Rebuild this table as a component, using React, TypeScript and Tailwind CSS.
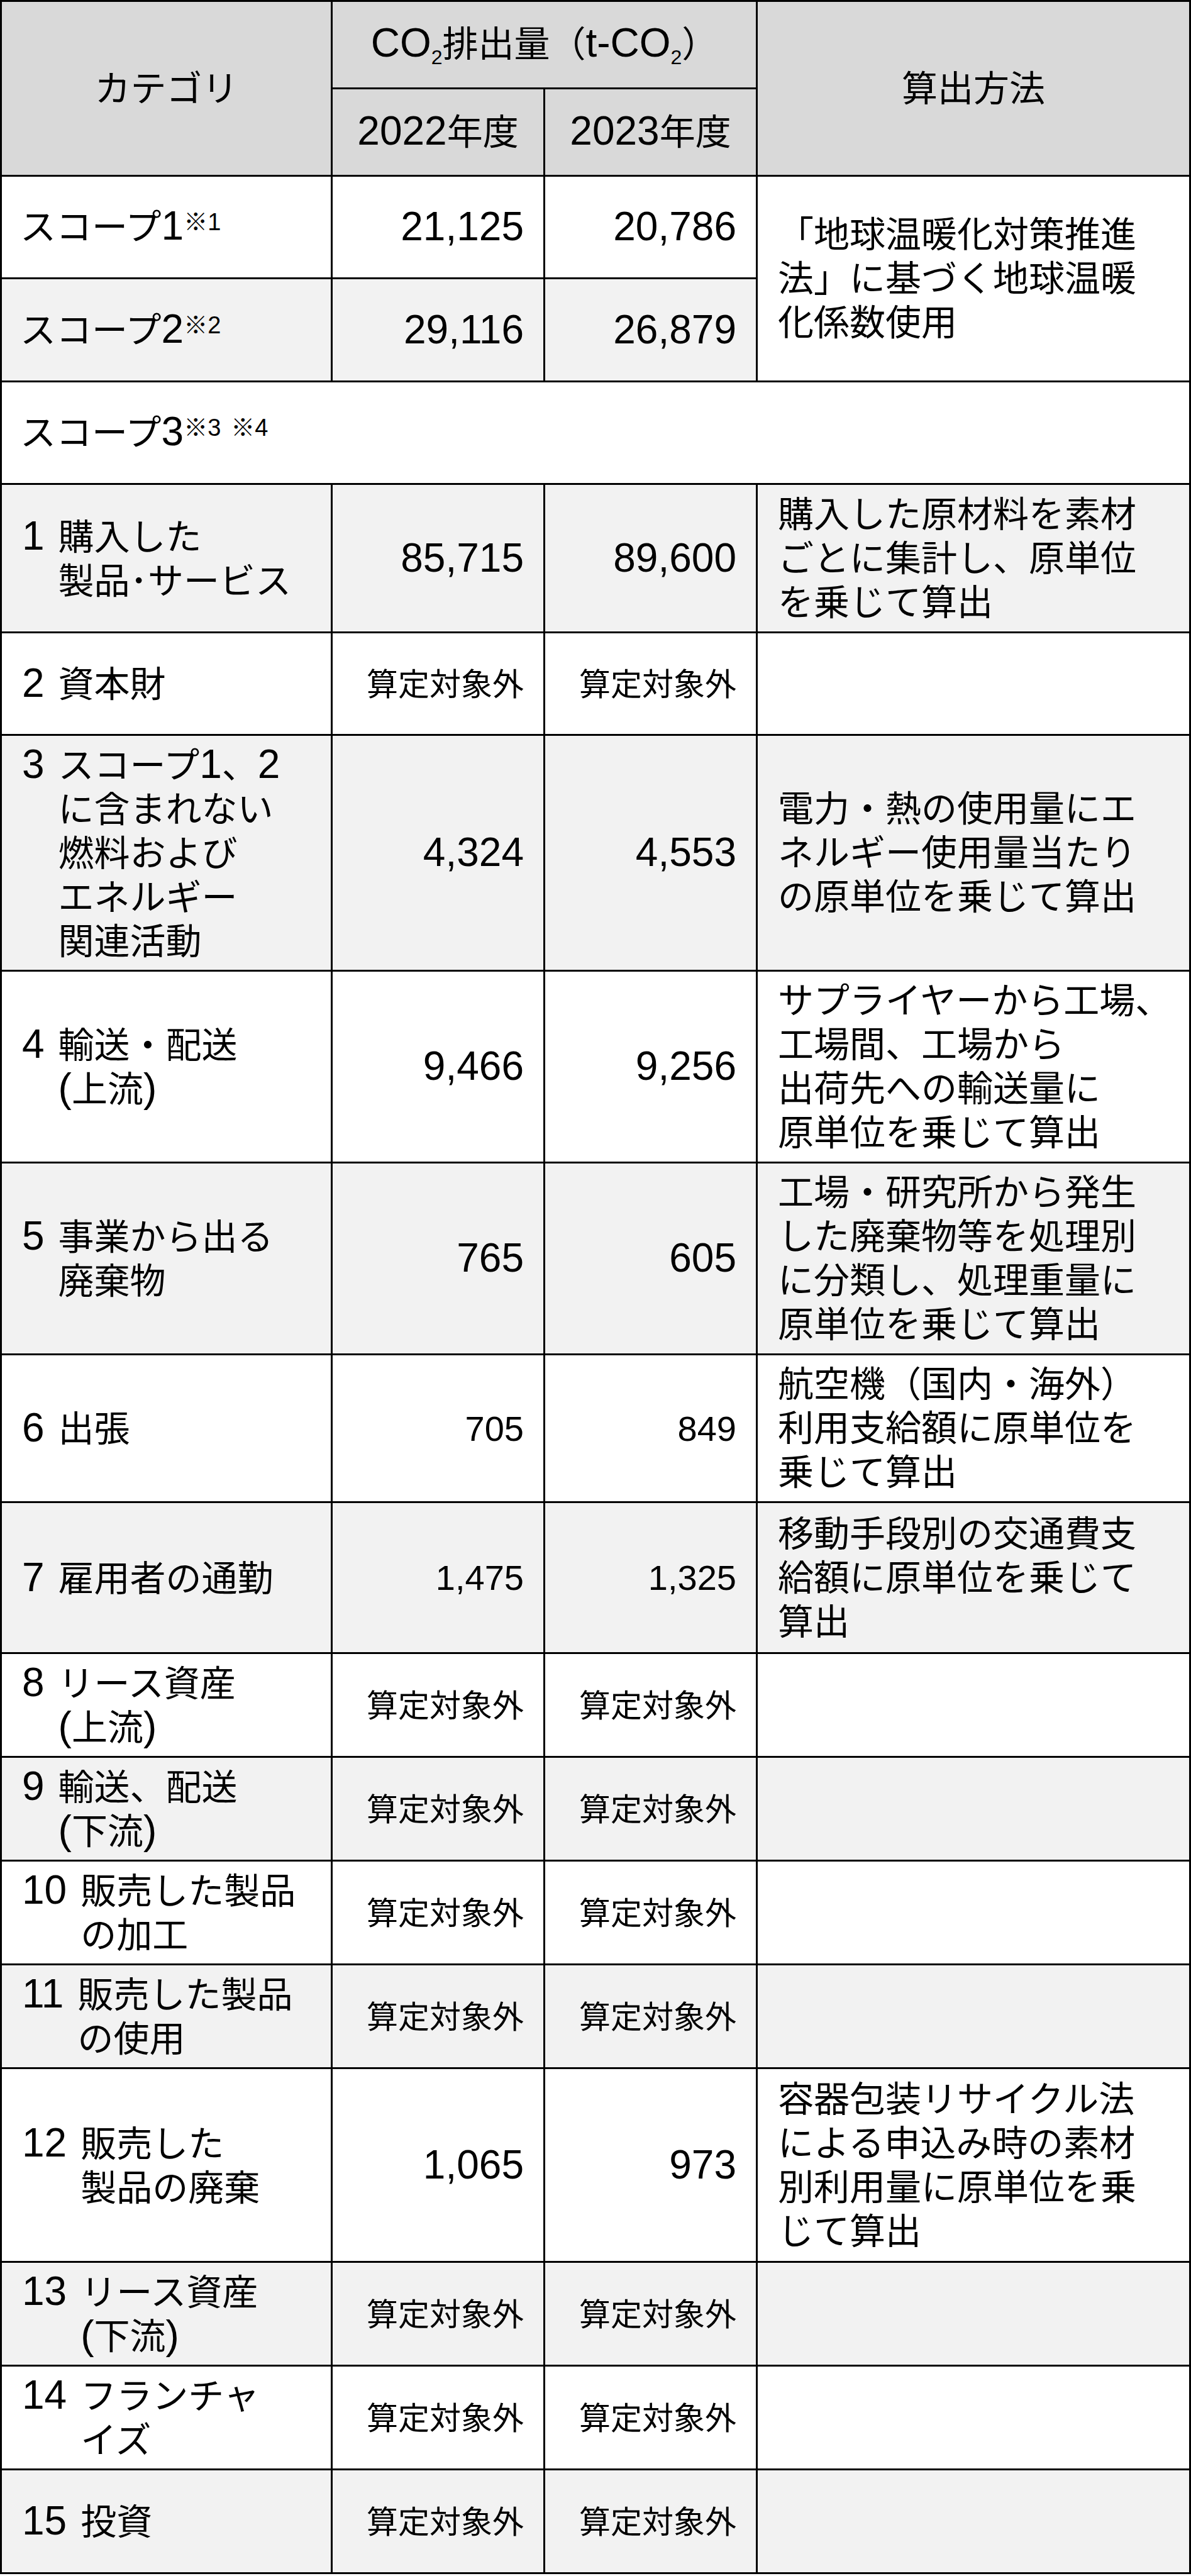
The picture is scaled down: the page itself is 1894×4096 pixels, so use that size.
import React from 'react';

type Row = {
  no: string;
  label: string[];
  v22: string;
  v23: string;
  small?: boolean;
  method?: string[];
  h: string;
  gray: boolean;
};

const rows: Row[] = [
  { no: '1', label: ['購入した', '製品･サービス'], v22: '85,715', v23: '89,600', method: ['購入した原材料を素材', 'ごとに集計し、原単位', 'を乗じて算出'], h: 'h-[236px]', gray: true },
  { no: '2', label: ['資本財'], v22: '算定対象外', v23: '算定対象外', h: 'h-[163px]', gray: false },
  { no: '3', label: ['スコープ1、2', 'に含まれない', '燃料および', 'エネルギー', '関連活動'], v22: '4,324', v23: '4,553', method: ['電力・熱の使用量にエ', 'ネルギー使用量当たり', 'の原単位を乗じて算出'], h: 'h-[375px]', gray: true },
  { no: '4', label: ['輸送・配送', '(上流)'], v22: '9,466', v23: '9,256', method: ['サプライヤーから工場、', '工場間、工場から', '出荷先への輸送量に', '原単位を乗じて算出'], h: 'h-[305px]', gray: false },
  { no: '5', label: ['事業から出る', '廃棄物'], v22: '765', v23: '605', method: ['工場・研究所から発生', 'した廃棄物等を処理別', 'に分類し、処理重量に', '原単位を乗じて算出'], h: 'h-[305px]', gray: true },
  { no: '6', label: ['出張'], v22: '705', v23: '849', small: true, method: ['航空機（国内・海外）', '利用支給額に原単位を', '乗じて算出'], h: 'h-[235px]', gray: false },
  { no: '7', label: ['雇用者の通勤'], v22: '1,475', v23: '1,325', small: true, method: ['移動手段別の交通費支', '給額に原単位を乗じて', '算出'], h: 'h-[240px]', gray: true },
  { no: '8', label: ['リース資産', '(上流)'], v22: '算定対象外', v23: '算定対象外', h: 'h-[165px]', gray: false },
  { no: '9', label: ['輸送、配送', '(下流)'], v22: '算定対象外', v23: '算定対象外', h: 'h-[165px]', gray: true },
  { no: '10', label: ['販売した製品', 'の加工'], v22: '算定対象外', v23: '算定対象外', h: 'h-[165px]', gray: false },
  { no: '11', label: ['販売した製品', 'の使用'], v22: '算定対象外', v23: '算定対象外', h: 'h-[165px]', gray: true },
  { no: '12', label: ['販売した', '製品の廃棄'], v22: '1,065', v23: '973', method: ['容器包装リサイクル法', 'による申込み時の素材', '別利用量に原単位を乗', 'じて算出'], h: 'h-[308px]', gray: false },
  { no: '13', label: ['リース資産', '(下流)'], v22: '算定対象外', v23: '算定対象外', h: 'h-[165px]', gray: true },
  { no: '14', label: ['フランチャ', 'イズ'], v22: '算定対象外', v23: '算定対象外', h: 'h-[165px]', gray: false },
  { no: '15', label: ['投資'], v22: '算定対象外', v23: '算定対象外', h: 'h-[165px]', gray: true },
];

const cell = 'border-[3px] border-black py-[6px]';

// latin runs are set a bit larger, like the original font's latin glyphs
const L = ({ children }: { children: React.ReactNode }) => (
  <span className="text-[64px] leading-none">{children}</span>
);

function rich(s: string) {
  return s.split(/([\x21-\x7e]+)/).map((p, i) =>
    /^[\x21-\x7e]+$/.test(p) ? <L key={i}>{p}</L> : p
  );
}

const Lines = ({ lines }: { lines: string[] }) => (
  <>
    {lines.map((l, i) => (
      <React.Fragment key={i}>
        {i > 0 && <br />}
        {rich(l)}
      </React.Fragment>
    ))}
  </>
);

const Sup = ({ children }: { children: React.ReactNode }) => (
  <span className="text-[38px] leading-none align-[15px]">{children}</span>
);

const Sub = ({ children }: { children: React.ReactNode }) => (
  <span className="text-[32px] leading-none align-[-12px]">{children}</span>
);

const Value = ({ v, small }: { v: string; small?: boolean }) => {
  if (v === '算定対象外') return <span className="text-[50px]">{v}</span>;
  return <span className={small ? 'text-[56px]' : 'text-[64px]'}>{v}</span>;
};

const App: React.FC = () => {
  return (
    <div className="bg-white w-[1894px]">
      <table className="w-[1891px] table-fixed border-collapse whitespace-nowrap text-black text-[57px] leading-[70px] font-['Liberation_Sans','Noto_Sans_CJK_JP',sans-serif]">
        <colgroup>
          <col className="w-[526px]" />
          <col className="w-[338px]" />
          <col className="w-[338px]" />
          <col className="w-[689px]" />
        </colgroup>
        <thead>
          <tr className="h-[139px] bg-[#d9d9d9]">
            <th rowSpan={2} className={`${cell} font-normal text-center`}>カテゴリ</th>
            <th colSpan={2} className={`${cell} font-normal text-center`}>
              <L>CO</L><Sub>2</Sub>排出量（<L>t-CO</L><Sub>2</Sub>）
            </th>
            <th rowSpan={2} className={`${cell} font-normal text-center`}>算出方法</th>
          </tr>
          <tr className="h-[139px] bg-[#d9d9d9]">
            <th className={`${cell} font-normal text-center`}><L>2022</L>年度</th>
            <th className={`${cell} font-normal text-center`}><L>2023</L>年度</th>
          </tr>
        </thead>
        <tbody>
          <tr className="h-[163px] bg-white">
            <td className={`${cell} pl-[29px]`}>スコープ<L>1</L><Sup>※1</Sup></td>
            <td className={`${cell} pr-[31px] text-right`}><Value v="21,125" /></td>
            <td className={`${cell} pr-[31px] text-right`}><Value v="20,786" /></td>
            <td rowSpan={2} className={`${cell} pl-[32px] bg-white`}>
              <Lines lines={['「地球温暖化対策推進', '法」に基づく地球温暖', '化係数使用']} />
            </td>
          </tr>
          <tr className="h-[164px] bg-[#f2f2f2]">
            <td className={`${cell} pl-[29px]`}>スコープ<L>2</L><Sup>※2</Sup></td>
            <td className={`${cell} pr-[31px] text-right`}><Value v="29,116" /></td>
            <td className={`${cell} pr-[31px] text-right`}><Value v="26,879" /></td>
          </tr>
          <tr className="h-[163px] bg-white">
            <td colSpan={4} className={`${cell} pl-[29px]`}>
              スコープ<L>3</L><Sup>※3</Sup> <Sup>※4</Sup>
            </td>
          </tr>
          {rows.map((r) => (
            <tr key={r.no} className={`${r.h} ${r.gray ? 'bg-[#f2f2f2]' : 'bg-white'}`}>
              <td className={`${cell} pl-[32px]`}>
                <div className="flex items-baseline gap-[22px]">
                  <span className="text-[64px] leading-[70px]">{r.no}</span>
                  <span><Lines lines={r.label} /></span>
                </div>
              </td>
              <td className={`${cell} pr-[31px] text-right`}><Value v={r.v22} small={r.small} /></td>
              <td className={`${cell} pr-[31px] text-right`}><Value v={r.v23} small={r.small} /></td>
              <td className={`${cell} pl-[32px]`}>{r.method && <Lines lines={r.method} />}</td>
            </tr>
          ))}
        </tbody>
      </table>
    </div>
  );
};

export default App;
